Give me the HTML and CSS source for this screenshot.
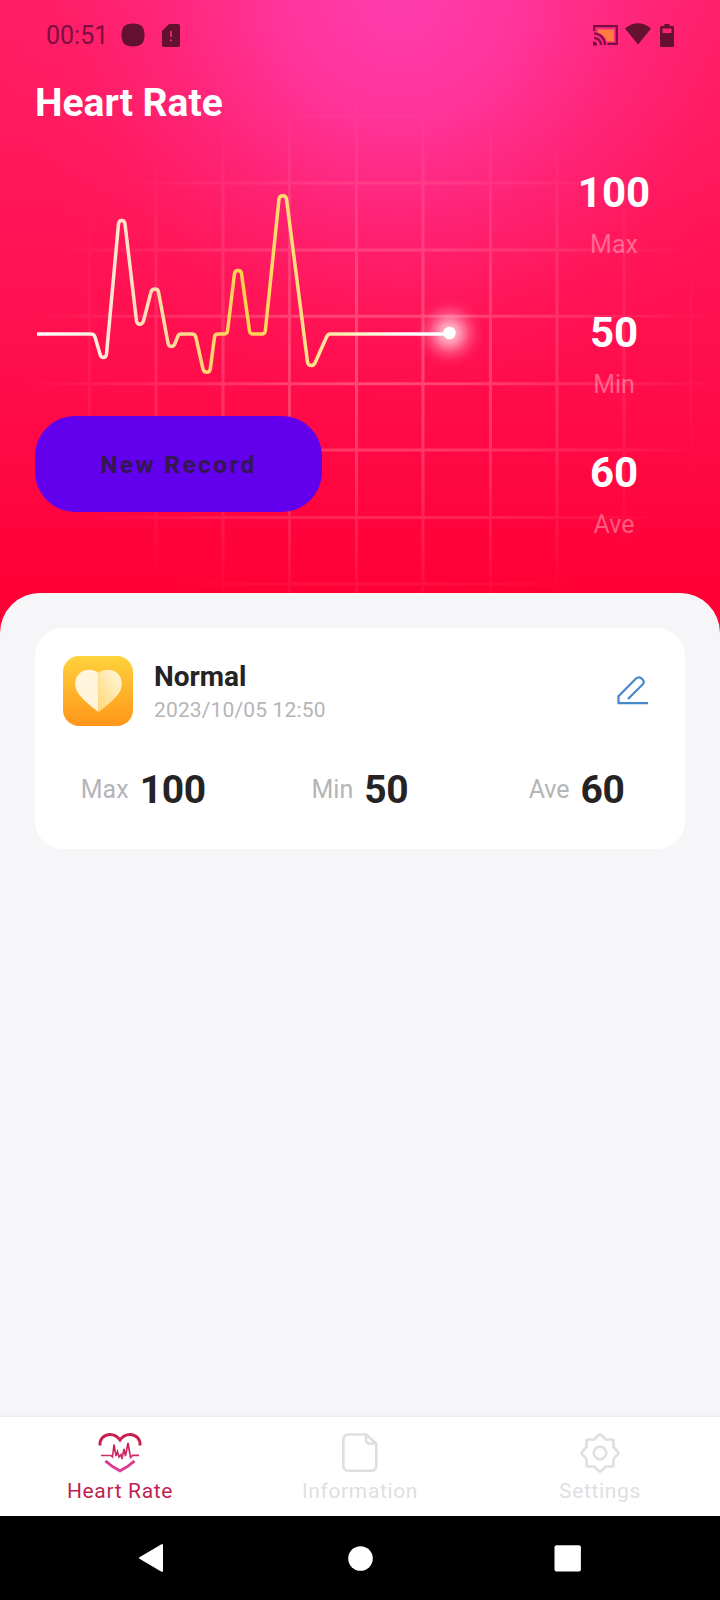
FILE: index.html
```html
<!DOCTYPE html>
<html lang="en">
<head>
<meta charset="utf-8">
<title>Heart Rate</title>
<link rel="stylesheet" href="styles.css">
</head>
<body>
<div class="screen">
  <svg class="grid-art" viewBox="0 0 720 640" width="720" height="640" aria-hidden="true">
    <defs>
      <radialGradient id="fade" gradientUnits="userSpaceOnUse" cx="0" cy="0" r="1" gradientTransform="translate(375 366) scale(350 270)">
        <stop offset="0" stop-color="#ffa0b0" stop-opacity=".42"/>
        <stop offset=".3" stop-color="#ffa0b0" stop-opacity=".32"/>
        <stop offset=".65" stop-color="#ffa0b0" stop-opacity=".17"/>
        <stop offset="1" stop-color="#ffa0b0" stop-opacity="0"/>
      </radialGradient>
    </defs>
    <path fill="none" stroke="url(#fade)" stroke-width="3" d="M22.5 60V640M89.3 60V640M156 60V640M223 60V640M289.5 60V640M356.5 60V640M423 60V640M490.5 60V640M557 60V640M624 60V640M691 60V640M0 116.500H720M0 183H720M0 250H720M0 316.300H720M0 383.700H720M0 450H720M0 517.500H720M0 584H720"/>
  </svg>

  <header class="status">
    <span class="clock">00:51</span>
    <svg class="status-dot" width="24" height="24" viewBox="0 0 24 24"><path d="M12 .5C20 .5 23.500 4 23.500 12S20 23.500 12 23.500.5 20 .5 12 4 .5 12 .5Z"/></svg>
    <svg class="status-sim" width="18" height="23" viewBox="0 0 18 23"><path d="M7 0h9a2 2 0 0 1 2 2v19a2 2 0 0 1-2 2H2a2 2 0 0 1-2-2V7Z"/><path class="mark" d="M9 7v6M9 15.500v2"/></svg>
    <svg class="status-cast" width="26" height="21" viewBox="0 0 26 21"><path class="cast-fill" d="M5 4.500H21V16.500H14Q12 10 5 7.500Z"/><path class="cast-line" d="M1.200 6V1.200H23.800V18.800H14.500M1 8.500A11 11 0 0 1 12 20M1 13A7 7 0 0 1 8 20"/><path d="M0 16.500A4 4 0 0 1 4 20.500H0Z"/></svg>
    <svg class="status-wifi" width="26" height="22" viewBox="0 0 26 22"><path d="M0 5.500Q13-5 26 5.500L13 21.500Z"/></svg>
    <svg class="status-battery" width="14" height="23" viewBox="0 0 14 23"><path fill-rule="evenodd" d="M4.500 0h5v2H12.500A1.500 1.500 0 0 1 14 3.500v18a1.500 1.500 0 0 1-1.500 1.500h-11A1.500 1.500 0 0 1 0 21.500v-18A1.500 1.500 0 0 1 1.500 2h3ZM2.500 4.500V9h9V4.500Z"/></svg>
  </header>

  <h1 class="title">Heart Rate</h1>

  <section class="hero">
    <div class="hero-main">
      <svg class="wave" viewBox="35 176 460 226" width="460" height="226" aria-hidden="true">
        <defs>
          <linearGradient id="ecg" gradientUnits="userSpaceOnUse" x1="37" y1="0" x2="449" y2="0">
            <stop offset="0" stop-color="#fff"/>
            <stop offset=".22" stop-color="#ffe3c8"/>
            <stop offset=".5" stop-color="#ffd24c"/>
            <stop offset=".68" stop-color="#ffe292"/>
            <stop offset=".9" stop-color="#fff"/>
          </linearGradient>
          <radialGradient id="glow">
            <stop offset="0" stop-color="#fff" stop-opacity=".8"/>
            <stop offset=".3" stop-color="#fff" stop-opacity=".55"/>
            <stop offset=".6" stop-color="#fff" stop-opacity=".2"/>
            <stop offset=".82" stop-color="#fff" stop-opacity=".05"/>
            <stop offset="1" stop-color="#fff" stop-opacity="0"/>
          </radialGradient>
        </defs>
        <circle cx="449.500" cy="333" r="34" fill="url(#glow)"/>
        <path fill="none" stroke="url(#ecg)" stroke-width="3.500" stroke-linejoin="round" d="M37 334H91Q94 334 95 337L100 354Q101 357.500 103.300 357.500Q106 357.500 106.500 354L118.500 224Q119 220.500 121.700 220.500Q124.500 220.500 125 224L136.500 321Q137 324.300 139.800 324.300Q142.300 324.300 143.500 321L151 292Q152 289 155 289Q158 289 158.500 292L168 343Q168.600 346.500 171.300 346.500Q173.800 346.500 175 343.500L177.500 337Q178.500 334 181 334H192Q195 334 195.800 337L203 369Q204 372.300 207 372.300Q209.800 372.300 210.300 369L214.500 337Q215 334 218 334H224Q227 334 227.500 331L234.500 273.500Q235 270.500 238 270.500Q241 270.500 241.500 273.500L249.500 331Q250 334 253 334H262Q264.800 334 265.300 331L279 199Q279.500 195.800 282.800 195.800Q286 195.800 286.500 199L307.500 362Q308 365.500 311.300 365.500Q313.500 365.500 315 363L326.500 337Q328 334 330 334H449"/>
        <circle cx="449.500" cy="333" r="6.200" fill="#fff"/>
      </svg>
      <button class="new-record">New Record</button>
    </div>
    <div class="stats">
      <div class="stat"><strong>100</strong><span>Max</span></div>
      <div class="stat"><strong>50</strong><span>Min</span></div>
      <div class="stat"><strong>60</strong><span>Ave</span></div>
    </div>
  </section>

  <main class="sheet">
    <article class="card">
      <div class="card-head">
        <svg class="badge" width="70" height="70" viewBox="0 0 70 70">
          <defs>
            <linearGradient id="tile" x1="0" y1="0" x2="0" y2="1"><stop offset="0" stop-color="#ffd23b"/><stop offset="1" stop-color="#ff961a"/></linearGradient>
            <linearGradient id="half" x1="1" y1="0" x2="0" y2="1"><stop offset="0" stop-color="#fff8df"/><stop offset="1" stop-color="#ffd878"/></linearGradient>
          </defs>
          <rect width="70" height="70" rx="16" fill="url(#tile)"/>
          <path fill="#fff5dc" d="M35.500 17C31 13 22 12.500 17 17C11 22 11 31 15 37C19 43 27 49.500 35.500 56Z"/>
          <path fill="url(#half)" d="M35.500 17C40 13 49 12.500 54 17C60 22 60 31 56 37C52 43 44 49.500 35.500 56Z"/>
        </svg>
        <div class="card-title">
          <h2>Normal</h2>
          <time>2023/10/05 12:50</time>
        </div>
        <svg class="edit" width="32" height="30" viewBox="0 0 32 30"><path d="M31 27.200H1.500V20.300L19 2.500Q21.500 .3 24 2L25.500 3.500Q28 6 25.800 8.200L11 23"/></svg>
      </div>
      <dl class="values">
        <div><dt>Max</dt><dd>100</dd></div>
        <div><dt>Min</dt><dd>50</dd></div>
        <div><dt>Ave</dt><dd>60</dd></div>
      </dl>
    </article>
  </main>

  <nav class="tabs">
    <a class="tab active">
      <svg width="44" height="42" viewBox="0 0 44 42">
        <defs><linearGradient id="heart" x1="0" y1="0" x2="0" y2="1" gradientUnits="userSpaceOnUse" gradientTransform="scale(1 42)"><stop offset=".4" stop-color="#c9204f"/><stop offset="1" stop-color="#e04bb0"/></linearGradient></defs>
        <g fill="none" stroke="url(#heart)">
          <path stroke-width="3" d="M2 13.500C1.500 7 6 2.500 12 2.500C16.500 2.500 19.500 4.500 22 8C24.500 4.500 27.500 2.500 32 2.500C38 2.500 42.500 7 42 13.500"/>
          <path stroke-width="1.600" d="M3 23.500H13L14.500 25L16 12.500L18 24L19.500 19.500L21 25L23 22.500L24 27L26 17L27.500 24L30 11L32.500 25.500L34.500 23.400H41"/>
          <path stroke-width="3" d="M7.500 29Q14 35 22 38.800Q30 35 36.500 29"/>
        </g>
      </svg>
      <span>Heart Rate</span>
    </a>
    <a class="tab">
      <svg width="44" height="42" viewBox="0 0 44 42"><path class="line" d="M28 2.500H10.500Q5.300 2.500 5.300 7.700V33.500Q5.300 38.800 10.500 38.800H33Q38.300 38.800 38.300 33.500V11.500L28 2.500V7.500Q28 11.500 32 11.500H38.300"/></svg>
      <span>Information</span>
    </a>
    <a class="tab">
      <svg width="44" height="42" viewBox="0 0 44 42"><path class="line" d="M20.800 3Q22 2 23.200 3L28 7.500H34Q35.500 7.500 35.500 9V15L40 19.800Q41 21 40 22.200L35.500 26.800V33Q35.500 34.500 34 34.500H28L23.200 39Q22 40 20.800 39L16 34.500H10Q8.500 34.500 8.500 33V26.800L4 22.200Q3 21 4 19.800L8.500 15V9Q8.500 7.500 10 7.500H16Z"/><circle class="line" cx="22" cy="21" r="6.300"/></svg>
      <span>Settings</span>
    </a>
  </nav>

  <footer class="system-nav">
    <svg width="28" height="30" viewBox="0 0 28 30"><path d="M25 2V28L3 15Z" stroke="#fff" stroke-width="2" stroke-linejoin="round"/></svg>
    <svg width="26" height="26" viewBox="0 0 26 26"><circle cx="13.500" cy="13.500" r="12.300"/></svg>
    <svg width="28" height="28" viewBox="0 0 28 28"><rect x=".5" y="1.200" width="26.400" height="26.400" rx="2"/></svg>
  </footer>
</div>
</body>
</html>
```

FILE: styles.css
```css
* { box-sizing: border-box; }

body {
  margin: 0;
  font-family: Roboto, "Liberation Sans", sans-serif;
}

h1, h2, dl, dd { margin: 0; }

svg { display: block; flex: none; }

.screen {
  position: relative;
  display: flex;
  flex-direction: column;
  width: 720px;
  height: 1600px;
  overflow: hidden;
  background:
    radial-gradient(ellipse 400px 400px at 400px 0, rgba(255, 62, 178, .92) 0%, rgba(255, 60, 172, .78) 28%, rgba(255, 50, 150, .42) 58%, rgba(255, 40, 125, .14) 82%, rgba(255, 30, 110, 0) 100%),
    linear-gradient(#ff1e66 0, #ff1659 200px, #ff0c49 400px, #ff0035 600px);
}

/* Decorative grid behind the header */
.grid-art { position: absolute; top: 0; left: 0; }

.status, .title, .hero, .sheet { position: relative; }

.status {
  display: flex;
  align-items: center;
  height: 70px;
  padding: 0 46px 0 46px;
  color: #7c0d40;
  fill: #64102f;
}
.clock { width: 75px; font-size: 25px; line-height: 30px; padding-top: 2px; }
.status-sim { margin-left: 17px; }
.mark { stroke: #e0307a; stroke-width: 1.8; }
.status-cast { margin-left: auto; }
.cast-line { fill: none; stroke: #7c0d40; stroke-width: 2.2; }
.cast-fill { fill: #ff7b42; }
.status-wifi { margin: -2px 9px 0 6px; }

.title {
  height: 66px;
  padding: 10px 35px 0;
  color: #fff;
  font-size: 39px;
  line-height: 46px;
  font-weight: 700;
}

.hero {
  display: flex;
  justify-content: space-between;
  height: 457px;
  padding: 40px 35px 0;
}
.wave { margin-bottom: 14px; }

.new-record {
  display: block;
  width: 287px;
  height: 96px;
  padding: 2px 0 0;
  border: 0;
  border-radius: 40px;
  background: #6200ee;
  color: #33174f;
  font: 700 24.5px/94px Roboto, sans-serif;
  letter-spacing: 2.4px;
}

.stats { width: 142px; margin-top: -9px; }
.stat {
  display: flex;
  flex-direction: column;
  align-items: center;
  height: 140px;
  color: #fff;
}
.stat strong { font-size: 42px; line-height: 52px; }
.stat span { font-size: 25px; line-height: 28px; margin-top: 12px; color: rgba(255, 255, 255, .34); }

.sheet {
  flex: 1;
  padding: 35px;
  border-radius: 40px 40px 0 0;
  background: #f6f6f9;
}
.card {
  height: 221px;
  border-radius: 28px;
  background: #fff;
}
.card-head {
  display: flex;
  align-items: center;
  padding: 28px 36px 0 28px;
}
.card-title { flex: 1; margin-left: 21px; }
.card-title h2 { font-size: 28px; line-height: 34px; color: #262324; }
.card-title time { display: block; font-size: 21px; line-height: 26px; margin-top: 3px; color: #b5b5b7; letter-spacing: .15px; }
.edit path { fill: none; stroke: #4788cc; stroke-width: 2.2; }

.values { display: grid; grid-template-columns: repeat(3, 1fr); margin-top: 38px; }
.values div { display: flex; align-items: center; justify-content: center; gap: 11px; }
.values dt { font-size: 25px; color: #b5b5b7; }
.values dd { font-size: 39px; line-height: 50px; padding-top: 1px; font-weight: 700; color: #262324; letter-spacing: -.3px; }

.tabs {
  position: relative;
  display: grid;
  grid-template-columns: repeat(3, 1fr);
  height: 99px;
  background: #fff;
  box-shadow: 0 -1px 2px rgba(0, 0, 0, .06);
}
.tab {
  display: flex;
  flex-direction: column;
  align-items: center;
  padding-top: 15px;
  color: #dedfe3;
  font-size: 21px;
  line-height: 26px;
  letter-spacing: .65px;
}
.tab span { margin-top: 4px; }
.tab.active { color: #c21f50; }
.line { fill: none; stroke: #dedfe3; stroke-width: 2.6; stroke-linejoin: round; }

.system-nav {
  position: relative;
  display: flex;
  align-items: center;
  justify-content: space-between;
  height: 84px;
  padding: 0 138px 0 137px;
  background: #000;
  fill: #fff;
}
```
